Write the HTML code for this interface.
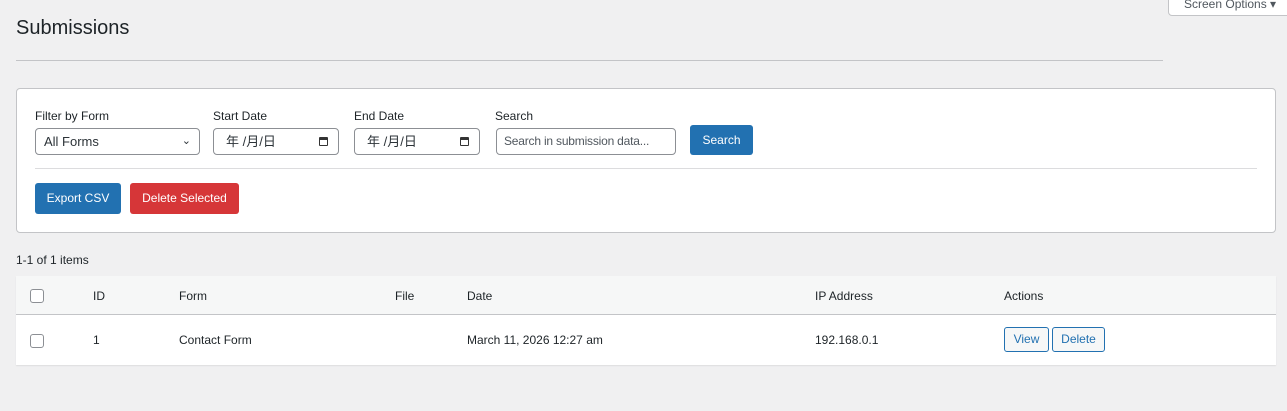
<!DOCTYPE html><html><head><style>
*{box-sizing:border-box;margin:0;padding:0}
body{width:1287px;height:411px;background:#f0f0f1;font-family:"Liberation Sans","Noto Sans CJK JP",sans-serif;color:#1d2327;position:relative;overflow:hidden;font-size:12px}
.a{position:absolute;white-space:nowrap}
.inp{position:absolute;border:1px solid #8c8f94;border-radius:4px;background:#fff;height:27px;top:128px;font-size:13px;padding:0 8px;line-height:25px;color:#2c3338;white-space:nowrap;overflow:hidden}
.btn{position:absolute;color:#fff;border-radius:3px;font-size:12px;text-align:center}
.cb{position:absolute;width:14px;height:14px;border:1px solid #8c8f94;border-radius:3px;background:#fff;left:30px}
.sb{position:absolute;height:25px;top:327px;border:1px solid #2271b1;border-radius:3px;background:#f6f7f7;color:#2271b1;font-size:12px;line-height:23px;text-align:center}
</style></head><body>
<div class="a" style="left:1168px;top:-6px;width:125px;height:22px;background:#fff;border:1px solid #c3c4c7;border-radius:0 0 4px 4px;font-size:12px;color:#50575e;padding-left:15px;line-height:18px">Screen Options ▾</div>
<div class="a" style="left:16px;top:17px;font-size:20px">Submissions</div>
<div class="a" style="left:16px;top:60px;width:1147px;height:1px;background:#c3c4c7"></div>
<div class="a" style="left:16px;top:88px;width:1260px;height:145px;background:#fff;border:1px solid #c3c4c7;border-radius:4px"></div>
<div class="a" style="left:35px;top:109px">Filter by Form</div>
<div class="a" style="left:213px;top:109px">Start Date</div>
<div class="a" style="left:354px;top:109px">End Date</div>
<div class="a" style="left:495px;top:109px">Search</div>
<div class="inp" style="left:35px;width:165px">All Forms<span class="a" style="right:8px;top:0;font-size:11px">&#8964;</span></div>
<div class="inp" style="left:213px;width:126px;padding-left:12px">年 /月/日<span class="a" style="right:10px;top:8px;width:9px;height:9px;border:1.5px solid #333;border-top-width:3px;border-radius:1px"></span></div>
<div class="inp" style="left:354px;width:126px;padding-left:12px">年 /月/日<span class="a" style="right:10px;top:8px;width:9px;height:9px;border:1.5px solid #333;border-top-width:3px;border-radius:1px"></span></div>
<div class="inp" style="left:496px;width:180px;color:#50575e;font-size:12px;padding-left:7px;letter-spacing:-0.2px">Search in submission data...</div>
<div class="btn" style="left:690px;top:125px;width:63px;height:30px;line-height:30px;background:#2271b1">Search</div>
<div class="a" style="left:35px;top:168px;width:1222px;height:1px;background:#dcdcde"></div>
<div class="btn" style="left:35px;top:183px;width:86px;height:31px;line-height:31px;background:#2271b1">Export CSV</div>
<div class="btn" style="left:130px;top:183px;width:109px;height:31px;line-height:31px;background:#d63638">Delete Selected</div>
<div class="a" style="left:16px;top:253px">1-1 of 1 items</div>
<div class="a" style="left:16px;top:276px;width:1260px;height:89px;background:#fff;box-shadow:0 1px 1px rgba(0,0,0,.08)"></div>
<div class="a" style="left:16px;top:276px;width:1260px;height:39px;background:#f6f7f7;border-bottom:1px solid #c3c4c7"></div>
<div class="cb" style="top:289px"></div>
<div class="a" style="top:289px;left:93px">ID</div>
<div class="a" style="top:289px;left:179px">Form</div>
<div class="a" style="top:289px;left:395px">File</div>
<div class="a" style="top:289px;left:467px">Date</div>
<div class="a" style="top:289px;left:815px">IP Address</div>
<div class="a" style="top:289px;left:1004px">Actions</div>
<div class="cb" style="top:334px"></div>
<div class="a" style="top:333px;left:93px">1</div>
<div class="a" style="top:333px;left:179px">Contact Form</div>
<div class="a" style="top:333px;left:467px">March 11, 2026 12:27 am</div>
<div class="a" style="top:333px;left:815px">192.168.0.1</div>
<div class="sb" style="left:1004px;width:45px">View</div>
<div class="sb" style="left:1052px;width:53px">Delete</div>
</body></html>
